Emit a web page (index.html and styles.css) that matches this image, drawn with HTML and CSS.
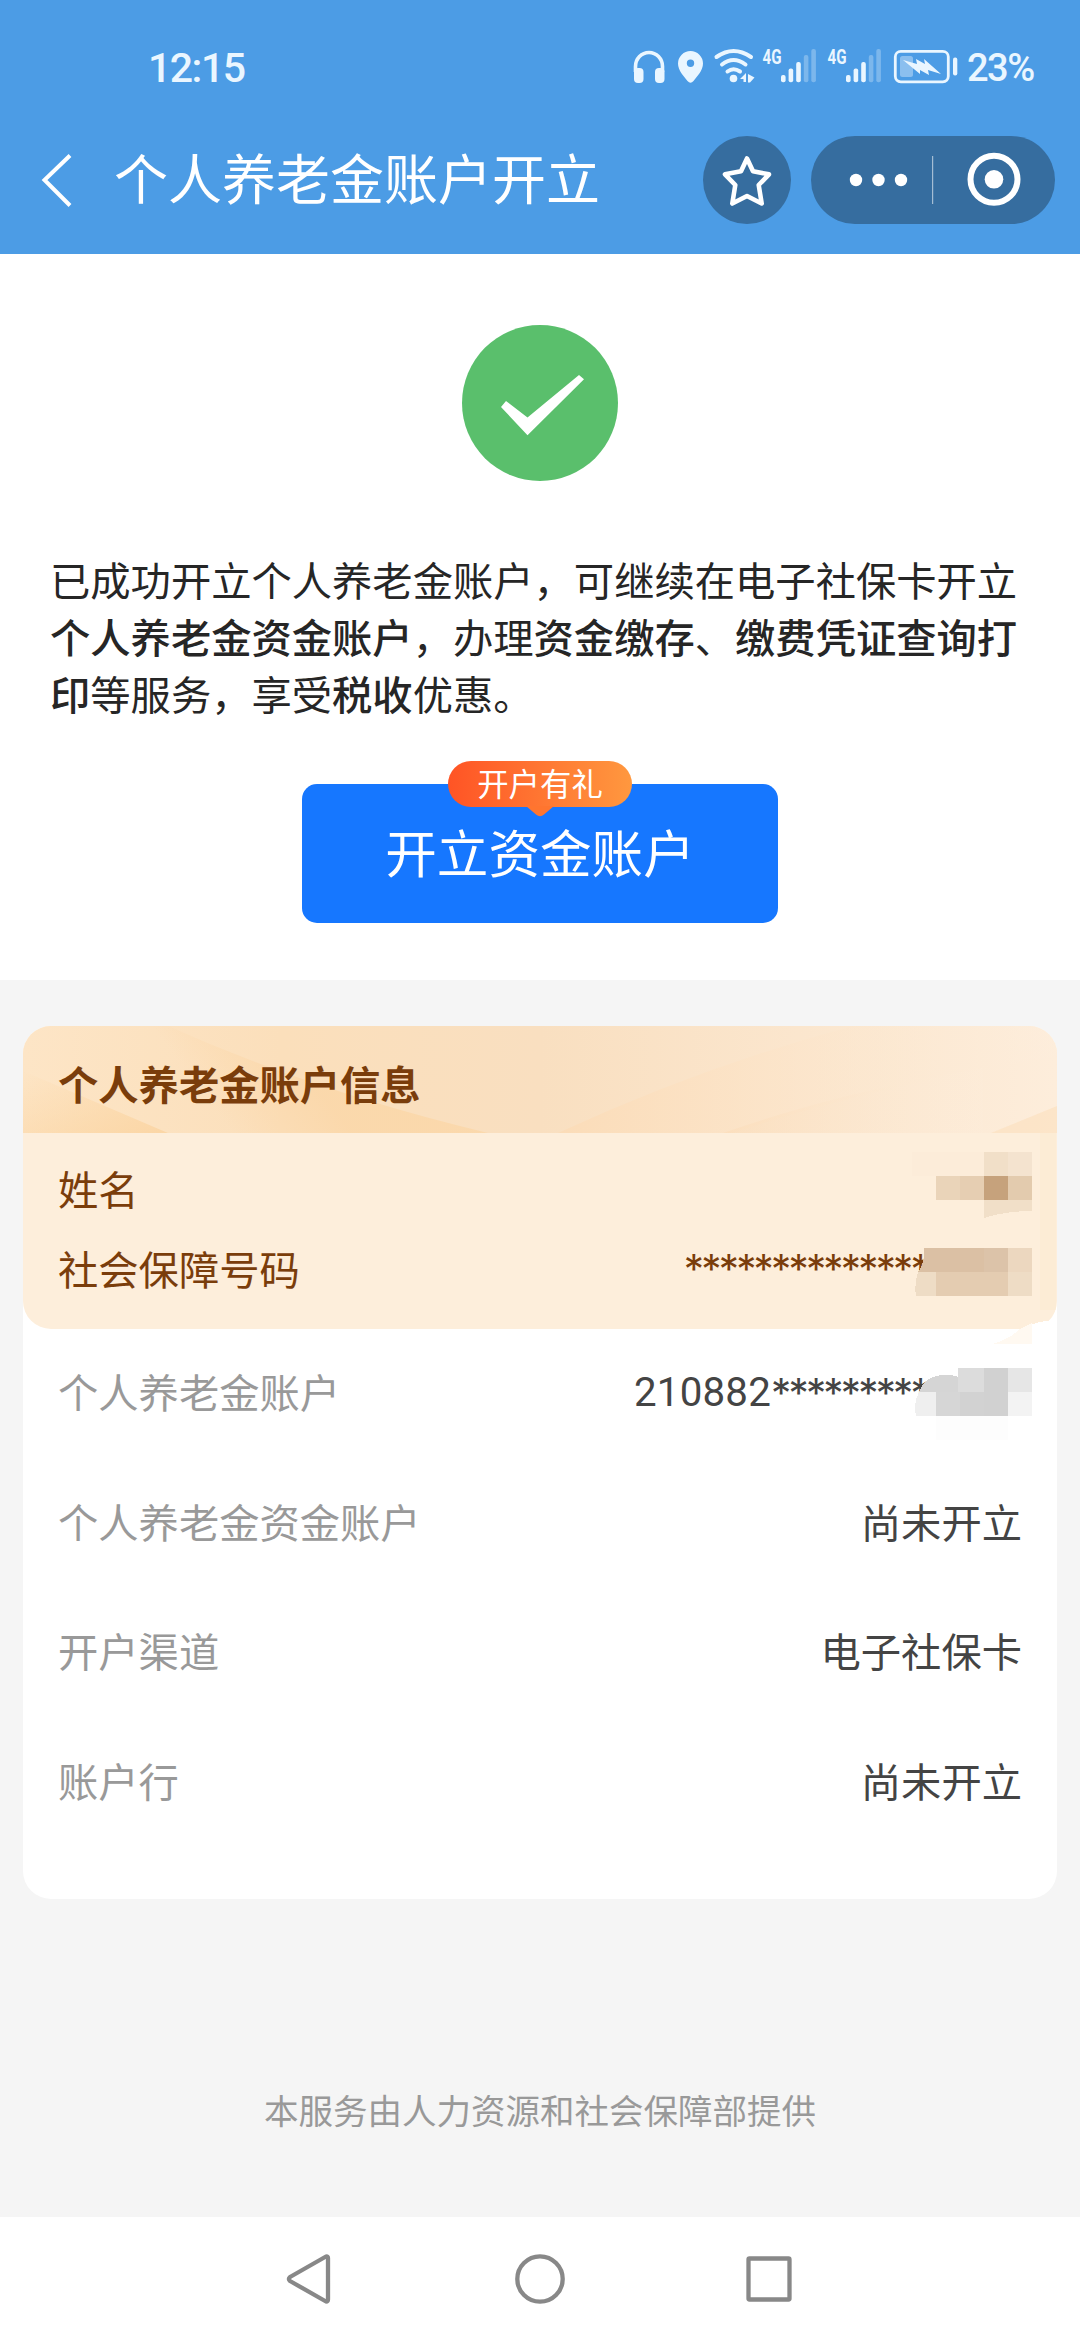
FILE: index.html
```html
<!DOCTYPE html>
<html lang="zh-CN">
<head>
<meta charset="utf-8">
<title>个人养老金账户开立</title>
<link rel="stylesheet" href="styles.css">
</head>
<body>
<header class="top">
  <div class="status">
    <span class="time">12:15</span>
    <div class="status-right">
      <svg class="status-icons" width="330" height="46" viewBox="630 43 330 46" fill="#eaf6ff">
        <path d="M634.5 72V66.500a13.500 14 0 0 1 27 0V72" fill="none" stroke="#eaf6ff" stroke-width="3.600"/>
        <rect x="633" y="68" width="9.500" height="15" rx="4"/>
        <rect x="654" y="68" width="9.500" height="15" rx="4"/>
        <path fill-rule="evenodd" d="M689.500 51a12.500 12.500 0 0 0-12.500 12.500c0 7 6 13 9.500 17.500q3 3.500 6 0c3.500-4.500 9.500-10.500 9.500-17.500A12.500 12.500 0 0 0 689.500 51zm0 8.500a3.700 3.700 0 1 1 0 7.400 3.700 3.700 0 0 1 0-7.400z"/>
        <g fill="none" stroke="#eaf6ff" stroke-width="4" stroke-linecap="round">
          <path d="M715.500 57q17-12 34.500 0"/>
          <path d="M721 64.500q11.500-9 23.500 0"/>
          <path d="M726.500 71.500q6-4.500 12.500 0"/>
        </g>
        <circle cx="732.500" cy="78.500" r="3.800"/>
        <path d="M739 79l6-6v9h-2.500v-3zM747 74l6.500 3.500-4.500 5h-2z"/>
        <text class="net" x="761.500" y="63.700" textLength="19" lengthAdjust="spacingAndGlyphs">4G</text>
        <rect x="780" y="75" width="4.600" height="7.300" rx="2"/>
        <rect x="787.600" y="68.500" width="4.600" height="13.800" rx="2"/>
        <rect x="795.200" y="62" width="4.600" height="20.300" rx="2"/>
        <g opacity=".3"><rect x="802.800" y="55" width="4.600" height="27.300" rx="2"/><rect x="810.300" y="49" width="4.600" height="33.300" rx="2"/></g>
        <text class="net" x="826.500" y="63.700" textLength="19" lengthAdjust="spacingAndGlyphs">4G</text>
        <rect x="845" y="75" width="4.600" height="7.300" rx="2"/>
        <rect x="852.600" y="68.500" width="4.600" height="13.800" rx="2"/>
        <rect x="860.200" y="62" width="4.600" height="20.300" rx="2"/>
        <g opacity=".3"><rect x="867.800" y="55" width="4.600" height="27.300" rx="2"/><rect x="875.300" y="49" width="4.600" height="33.300" rx="2"/></g>
        <rect x="894.300" y="51.300" width="53" height="30.500" rx="5.500" fill="none" stroke="#eaf6ff" stroke-width="2.800"/>
        <rect x="899" y="56" width="13" height="21" rx="2.500" opacity=".4"/>
        <path d="M902 60l14 4-1-5 9 5-1-5 17 15-13-4 1 5-9-5 0 4z"/>
        <rect x="952" y="57.500" width="4.300" height="18" rx="2"/>
      </svg>
      <span class="percent">23%</span>
    </div>
  </div>
  <div class="bar">
    <svg class="back" width="36" height="56" viewBox="0 0 36 56" fill="none" stroke="#fff" stroke-width="4"><path d="M32 3.500L6.500 28 32 53.500"/></svg>
    <h1 class="title">个人养老金账户开立</h1>
    <div class="round">
      <svg width="56" height="56" viewBox="0 0 56 56" fill="none" stroke="#fff" stroke-width="4.600" stroke-linejoin="round"><path d="M28 6.500L34 19.300 50 22.300 39.700 33 42.700 51.500 28 44 13.300 51.500 16.300 33 6 22.300 22 19.300z"/></svg>
    </div>
    <div class="capsule">
      <svg width="244" height="88" viewBox="0 0 244 88" fill="#fff">
        <circle cx="45" cy="44" r="6.200"/><circle cx="67.500" cy="44" r="6.200"/><circle cx="90" cy="44" r="6.200"/>
        <rect x="121" y="20" width="1.200" height="48" opacity=".55"/>
        <circle cx="183" cy="43.300" r="23.500" fill="none" stroke="#fff" stroke-width="6"/>
        <circle cx="183" cy="43.300" r="9.300"/>
      </svg>
    </div>
  </div>
</header>

<main class="main">
  <section class="result">
    <svg class="ok" width="156" height="156" viewBox="0 0 156 156"><circle cx="78" cy="78" r="78" fill="#5abf6c"/><path d="M39 82l5-6 21.500 16.500L117 50l5 4.300-56.500 56z" fill="#fff"/></svg>
    <p class="message">已成功开立个人养老金账户，可继续在电子社保卡开立<b>个人养老金资金账户</b>，办理<b>资金缴存</b>、<b>缴费凭证查询打印</b>等服务，享受<b>税收</b>优惠。</p>
    <button class="open">开立资金账户
      <span class="gift">开户有礼<svg class="tail" width="28" height="11" viewBox="0 0 28 11"><path d="M0 0h28l-10 8.500q-4 3.500-8 0z" fill="#ff752f"/></svg></span>
    </button>
  </section>

  <section class="card">
    <div class="owner">
      <h2 class="owner-title">
        <svg class="rays" viewBox="0 0 1034 107" preserveAspectRatio="none">
          <defs>
            <linearGradient id="base" x1="0" x2="1"><stop offset="0" stop-color="#fde5c6"/><stop offset=".25" stop-color="#fbdfbb"/><stop offset=".5" stop-color="#f9dfc0"/><stop offset="1" stop-color="#fdeddb"/></linearGradient>
            <linearGradient id="deep" x1="0" y1="0" x2="1" y2="1"><stop offset="0" stop-color="#fcd7a5" stop-opacity="0"/><stop offset="1" stop-color="#fbd6a6"/></linearGradient>
            <linearGradient id="band" gradientUnits="userSpaceOnUse" x1="210" y1="107" x2="285" y2="50"><stop offset="0" stop-color="#fbd6a6" stop-opacity="0"/><stop offset="1" stop-color="#fbd6a6"/></linearGradient>
            <linearGradient id="pale" x1="0" y1="0" x2="1" y2="0"><stop offset="0" stop-color="#fbdcb8"/><stop offset="1" stop-color="#fdeedd" stop-opacity=".2"/></linearGradient>
          </defs>
          <path fill="url(#base)" d="M0 0h1034v107H0z"/>
          <path fill="url(#deep)" d="M0 45L145 107H0z"/>
          <path fill="url(#band)" opacity=".75" d="M145 0Q290 65 465 107H150L0 0z"/>
          <path fill="url(#pale)" d="M535 107Q680 40 830 0H1034V30Q850 60 710 107z"/>
          <path fill="url(#pale)" opacity=".6" d="M700 107Q820 65 960 42V107z"/>
          <path fill="#fbdfbd" opacity=".6" d="M968 107L1034 80V107z"/>
        </svg>
        <span class="owner-name">个人养老金账户信息</span>
      </h2>
      <div class="row owner-row"><span>姓名</span></div>
      <div class="row owner-row"><span>社会保障号码</span><span class="masked id">**************</span></div>
    </div>
    <div class="row"><span class="label">个人养老金账户</span><span class="value account"><span class="digits">210882</span><span class="masked">*********</span></span></div>
    <div class="row"><span class="label">个人养老金资金账户</span><span class="value">尚未开立</span></div>
    <div class="row"><span class="label">开户渠道</span><span class="value">电子社保卡</span></div>
    <div class="row"><span class="label">账户行</span><span class="value">尚未开立</span></div>
    <svg class="mosaic" width="180" height="320" viewBox="900 1130 180 320" shape-rendering="crispEdges">
      <path fill="#fcecd9" d="M912 1152h72v24h-72z"/>
      <path fill="#f1dfc8" d="M984 1152h24v24h-24zM984 1200h48v11q-26 0-48 7z"/>
      <path fill="#f4e3cf" d="M1008 1152h24v24h-24z"/>
      <path fill="#ead4b9" d="M936 1176h24v24h-24z"/><path fill="#e6ceb2" d="M960 1176h24v24h-24z"/>
      <path fill="#c6a27c" d="M984 1176h24v24h-24z"/><path fill="#e3cbae" d="M1008 1176h24v24h-24z"/>
      <path fill="#fae8cd" d="M1040 1133h16v177h-16z" opacity=".4"/>
      <path fill="#dbc0a4" d="M924 1248h60v24h-66q7-8 6-24z"/><path fill="#dcc3a9" d="M984 1248h24v24h-24z"/><path fill="#ecd7bf" d="M1008 1248h24v24h-24z"/>
      <path fill="#eedcc5" d="M918 1272h18v24h-20q-2-12 2-24zM1008 1272h24v24h-24z"/>
      <path fill="#e4ccb1" d="M936 1272h72v24h-72z"/>
      <path fill="#fff" d="M1020 1330Q1038 1320 1057 1320V1345H1000z"/>
      <path fill="#fff9f1" d="M1020 1329L1032 1323V1344H992Q1008 1340 1020 1329z"/>
      <path fill="#d5d5d5" d="M919 1392Q925 1375 945 1375 955 1375 958 1377V1392z"/>
      <path fill="#dcdcdc" d="M958 1368h26v24h-26z"/><path fill="#d1d1d1" d="M984 1368h24v48h-24z"/><path fill="#e6e6e6" d="M1008 1368h24v24h-24z"/>
      <path fill="#efefef" d="M919 1392h17v24h-20q-3-12 3-24z"/>
      <path fill="#d6d6d6" d="M936 1392h24v24h-24z"/><path fill="#d2d2d2" d="M960 1392h24v24h-24z"/><path fill="#f3f3f3" d="M1008 1392h24v24h-24z"/>
      <path fill="#fdfdfd" d="M936 1416h72v24h-72z"/>
    </svg>
  </section>

  <p class="provider">本服务由人力资源和社会保障部提供</p>
</main>

<nav class="nav">
  <svg width="506" height="54" viewBox="286 2252 506 54" fill="none" stroke="#888" stroke-width="4.300" stroke-linejoin="round">
    <path d="M326 2256.500L290 2277q-2 2 0 4L326 2301.500q2 0 2-2V2258q0-2-2-1.500z"/>
    <circle cx="540" cy="2279" r="22.700"/>
    <rect x="748.500" y="2258.500" width="41" height="41" rx="1"/>
  </svg>
</nav>
</body>
</html>
```
FILE: styles.css
```css
* { box-sizing: border-box; }
body {
  margin: 0;
  width: 1080px;
  height: 2340px;
  display: flex;
  flex-direction: column;
  overflow: hidden;
  background: #fff;
  color: #262626;
  font-family: "Noto Sans CJK SC", sans-serif;
  font-size: 40.3px;
}
h1, h2, p { margin: 0; font-weight: 400; }

.top { flex: none; height: 254px; background: #4c9ce5; color: #fff; }
.status {
  height: 136px;
  padding: 0 44px 0 148px;
  display: flex;
  justify-content: space-between;
  align-items: center;
  color: #eaf6ff;
  font-family: Roboto, sans-serif;
  font-weight: 500;
}
.time { font-size: 41px; letter-spacing: -1.5px; }
.status-right { display: flex; align-items: center; gap: 6px; height: 136px; }
.status-icons { margin-top: -4px; overflow: visible; }
.net { font: 700 20px Roboto, sans-serif; }
.percent { width: 69px; font-size: 38px; letter-spacing: -1.5px; white-space: nowrap; }

.bar { display: flex; align-items: center; height: 88px; padding: 0 25px 0 38px; }
.title { margin-left: 40px; flex: 1; font-size: 54px; line-height: 82px; padding-bottom: 6px; }
.round, .capsule {
  display: flex;
  align-items: center;
  justify-content: center;
  height: 88px;
  border-radius: 44px;
  background: #366d9f;
}
.round { width: 88px; margin-right: 20px; }
.capsule { width: 244px; }

.main { flex: 1; background: #f5f5f5; }
.result {
  height: 726px;
  padding: 71px 50px 0;
  display: flex;
  flex-direction: column;
  align-items: center;
  background: #fff;
}
.message { width: 980px; margin-top: 68.5px; line-height: 57.4px; word-break: break-all; }
.message b { font-weight: 500; }
.open {
  position: relative;
  width: 476px;
  height: 139px;
  margin-top: 62px;
  padding: 0 0 5px;
  border: 0;
  border-radius: 15px;
  background: #1677ff;
  color: #fff;
  font-family: inherit;
  font-size: 51.6px;
  line-height: 133px;
}
.gift {
  position: absolute;
  left: 146px;
  top: -23px;
  width: 184px;
  height: 46px;
  border-radius: 23px;
  background: linear-gradient(90deg, #ff5425, #ff983f);
  font-size: 31.4px;
  line-height: 43px;
}
.tail { position: absolute; left: 78px; top: 45px; }

.card {
  position: relative;
  height: 873px;
  margin: 46px 23px 0;
  border-radius: 28px;
  background: #fff;
}
.owner {
  height: 303px;
  border-radius: 28px;
  overflow: hidden;
  background: #fdeedb;
  color: #7a3d0b;
}
.owner-title { position: relative; height: 107px; margin-bottom: 17px; font-size: 40.3px; line-height: 113px; }
.rays { position: absolute; inset: 0; width: 100%; height: 100%; }
.owner-name { position: relative; margin-left: 35px; font-weight: 700; }
.row {
  height: 129.5px;
  padding: 0 35px 5px;
  display: flex;
  align-items: center;
  justify-content: space-between;
  line-height: 58px;
}
.owner-row { height: 80px; }
.label { color: #999; }
.value { color: #444; }
.masked { font-family: Inter, sans-serif; letter-spacing: -2.75px; position: relative; top: 2px; }
.id { margin-right: 94px; }
.account { margin-right: 94px; }
.digits { font-family: Roboto, sans-serif; letter-spacing: 0.2px; }
.mosaic { position: absolute; left: 877px; top: 104px; }

.provider { margin-top: 180px; text-align: center; color: #999; font-size: 34.5px; line-height: 60px; }
.nav { flex: none; height: 123px; display: flex; align-items: center; padding-left: 286px; background: #fff; }
```
